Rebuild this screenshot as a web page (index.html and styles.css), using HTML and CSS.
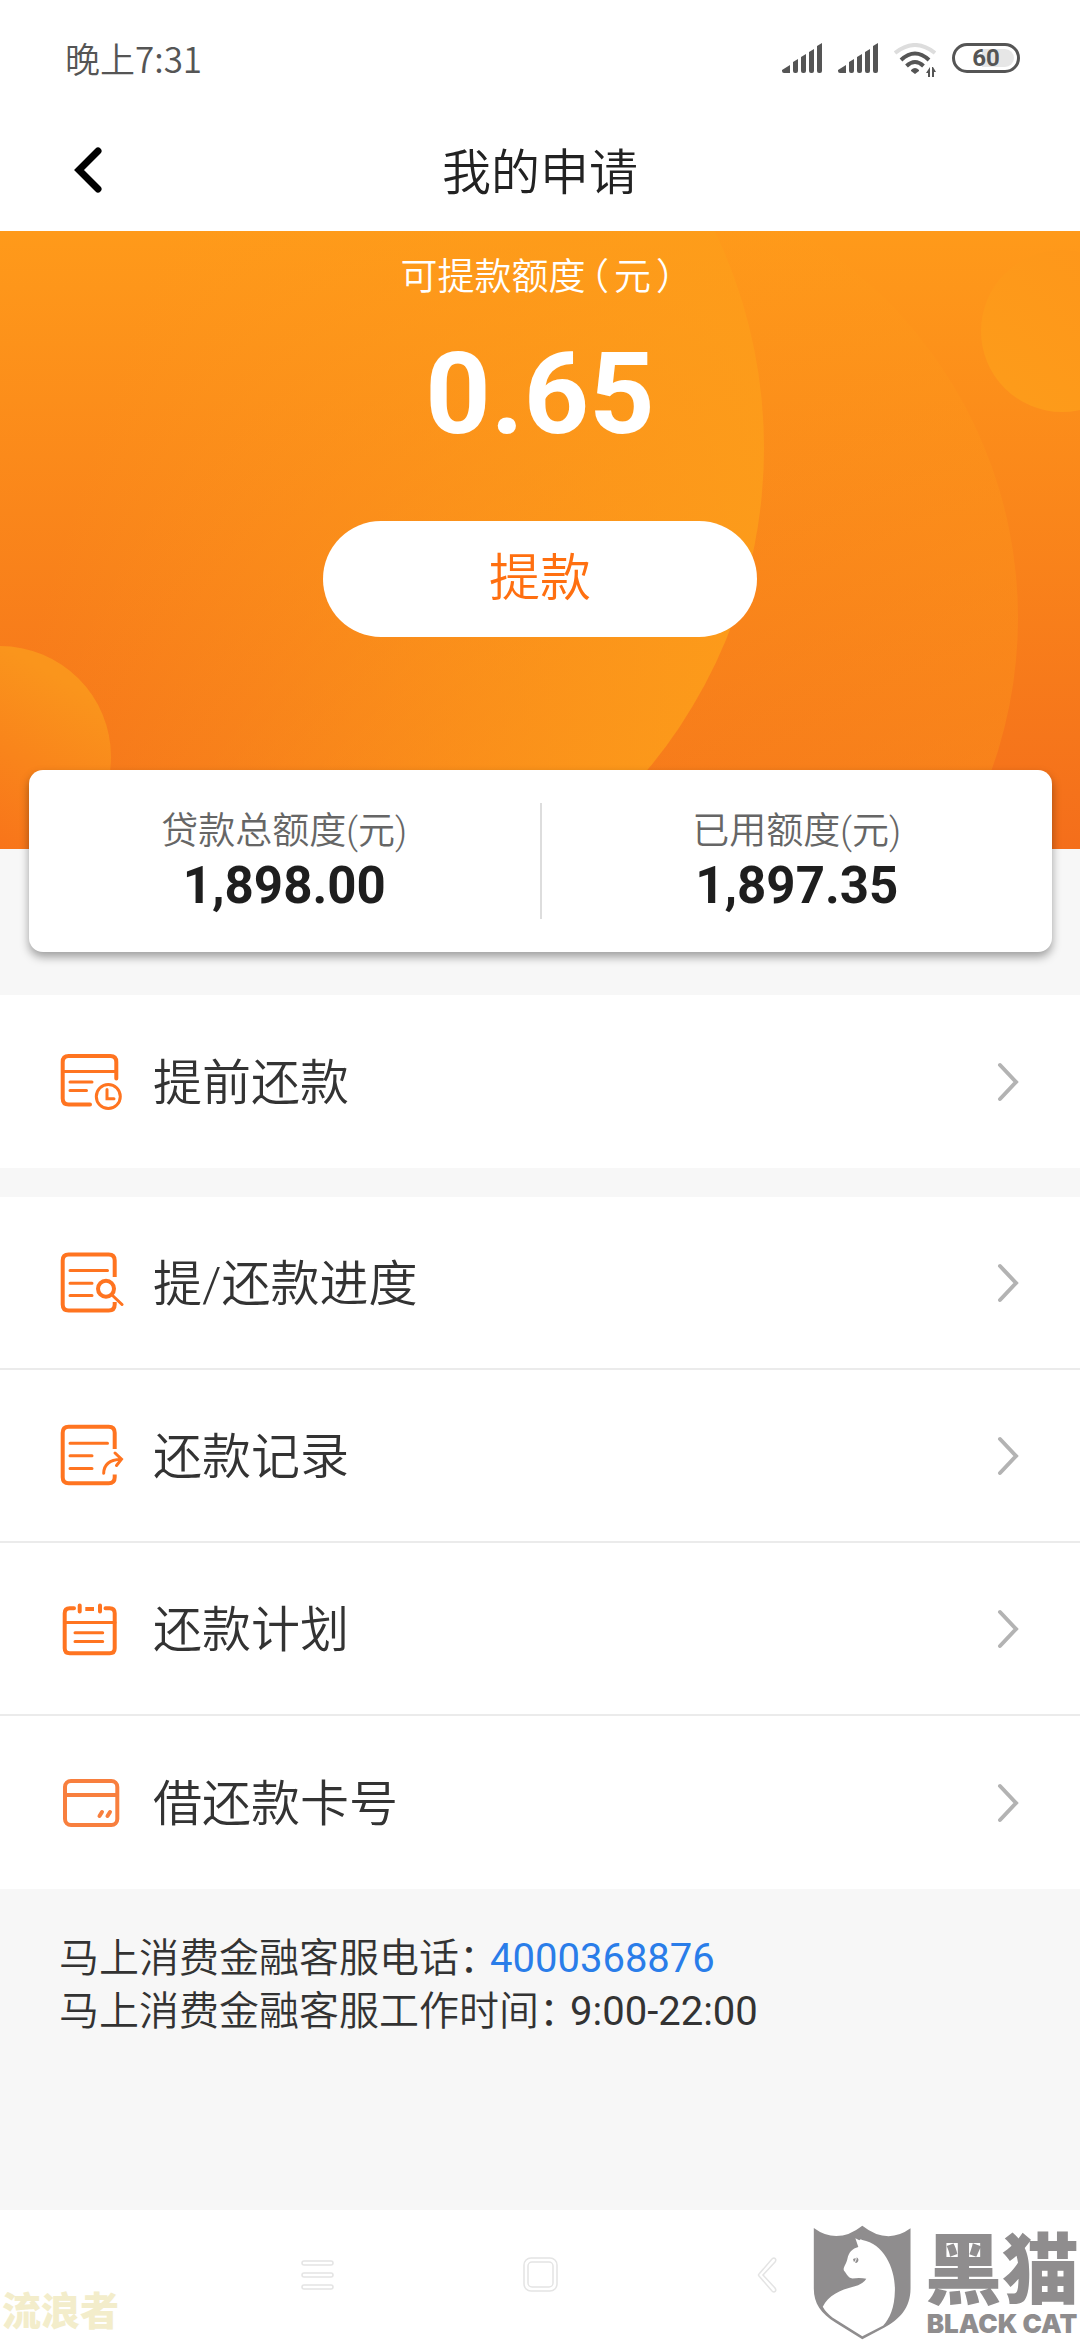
FILE: index.html
```html
<!DOCTYPE html>
<html lang="zh-CN">
<head>
<meta charset="utf-8">
<meta name="viewport" content="width=device-width, initial-scale=1">
<title>我的申请</title>
<link rel="stylesheet" href="styles.css">
</head>
<body>
<div class="page">
  <div class="status">
    <span class="status-time">晚上7:31</span>
    <div class="status-icons">
      <svg class="signal" viewBox="0 0 40 30" aria-hidden="true"><path d="M0 27l8-5v8H2q-2 0-2-2zM11 19l5-3v12q0 2-2 2h-1q-2 0-2-2zM19 14l5-3v17q0 2-2 2h-1q-2 0-2-2zM27 9l5-3v22q0 2-2 2h-1q-2 0-2-2zM35 3l5-3v28q0 2-2 2h-1q-2 0-2-2z"/></svg>
      <svg class="signal" viewBox="0 0 40 30" aria-hidden="true"><path d="M0 27l8-5v8H2q-2 0-2-2zM11 19l5-3v12q0 2-2 2h-1q-2 0-2-2zM19 14l5-3v17q0 2-2 2h-1q-2 0-2-2zM27 9l5-3v22q0 2-2 2h-1q-2 0-2-2zM35 3l5-3v28q0 2-2 2h-1q-2 0-2-2z"/></svg>
      <svg class="wifi" viewBox="0 0 42 34" aria-hidden="true">
        <path class="faint" d="M1 10Q21-6 41 10"/>
        <path class="arc" d="M7 17Q21 4 35 17M12.500 23Q21 15 29.500 23"/>
        <path class="solid" d="M17 27q4-4 8 0v1l-4 3-4-3zM36 24v10h-2v-4h-2zM38 24h1l3 5h-2v5h-2z"/>
      </svg>
      <span class="battery">60</span>
    </div>
  </div>

  <header class="topbar">
    <button class="back" type="button" aria-label="返回"><svg viewBox="0 0 28 46" aria-hidden="true"><path d="M24 4L5 23L24 42"/></svg></button>
    <h1 class="title">我的申请</h1>
  </header>

  <section class="hero">
    <svg class="hero-art" viewBox="0 0 1080 618" preserveAspectRatio="none" aria-hidden="true">
      <defs>
        <linearGradient id="inner" x1="0.38" y1="0.35" x2="1" y2="0.55"><stop offset="0" stop-color="#fd9e1a" stop-opacity="0"/><stop offset="1" stop-color="#fd9e1a" stop-opacity=".85"/></linearGradient>
        <linearGradient id="outer" x1="0.4" y1="0.2" x2="1" y2="0.6"><stop offset="0" stop-color="#fd9c1a" stop-opacity="0"/><stop offset="1" stop-color="#fd9c1a" stop-opacity=".35"/></linearGradient>
        <linearGradient id="sun" x1="1" y1="0" x2="0" y2="1"><stop offset="0" stop-color="#fe961a"/><stop offset="1" stop-color="#fd9c1a"/></linearGradient>
        <linearGradient id="drop" x1="0.7" y1="0.1" x2="0.3" y2="0.8"><stop offset="0" stop-color="#fa951c"/><stop offset="1" stop-color="#f8741a"/></linearGradient>
      </defs>
      <circle cx="568" cy="387" r="450" fill="url(#outer)"/>
      <circle cx="261" cy="217" r="503" fill="url(#inner)"/>
      <circle cx="1062" cy="100" r="81" fill="url(#sun)"/>
      <circle cx="0" cy="526" r="111" fill="url(#drop)"/>
    </svg>
    <p class="hero-label">可提款额度<span class="paren">（</span>元<span class="paren">）</span></p>
    <p class="hero-amount">0.65</p>
    <button class="withdraw" type="button">提款</button>
  </section>

  <section class="quota">
    <div class="quota-item"><span class="quota-label">贷款总额度(元)</span><strong class="quota-value">1,898.00</strong></div>
    <div class="quota-item"><span class="quota-label">已用额度(元)</span><strong class="quota-value">1,897.35</strong></div>
  </section>

  <nav class="menus">
    <div class="group">
      <a class="row" href="#prepay">
        <svg class="row-icon" viewBox="0 0 64 64" aria-hidden="true"><path class="bold" d="M56.300 28.500V12q0-6-6-6H8.700q-6 0-6 6v36.500q0 6 6 6H30"/><path d="M3 21.500h53M10 32h22M10 40.500h16.500M47 39.500v9.300h7"/><circle cx="48.300" cy="46.500" r="12"/></svg>
        <span class="row-text">提前还款</span>
        <svg class="arrow" viewBox="0 0 23 40" aria-hidden="true"><path d="M3 3L19 20L3 37"/></svg>
      </a>
    </div>
    <div class="group">
      <a class="row" href="#progress">
        <svg class="row-icon" viewBox="0 0 64 64" aria-hidden="true"><path class="bold butt" d="M54.700 26V9.500q0-6-6-6h-40q-6 0-6 6v44q0 6 6 6h40q6 0 6-6V51"/><path d="M10 19.500h37.500M10 32.200h22M10 44.500h22M52 44l10 9.500"/><circle class="bold" cx="46" cy="37.800" r="8"/></svg>
        <span class="row-text">提/还款进度</span>
        <svg class="arrow" viewBox="0 0 23 40" aria-hidden="true"><path d="M3 3L19 20L3 37"/></svg>
      </a>
      <a class="row" href="#records">
        <svg class="row-icon" viewBox="0 0 64 64" aria-hidden="true"><path class="bold butt" d="M54.700 25V8.800q0-6-6-6h-40q-6 0-6 6v44.500q0 6 6 6h40q6 0 6-6V50.500"/><path d="M10 19.200h37.500M10 31.800h22M10 44.500h22M43.700 49.200Q44 36 61 35.200M55 29l6.500 6.200L56.500 41.500"/></svg>
        <span class="row-text">还款记录</span>
        <svg class="arrow" viewBox="0 0 23 40" aria-hidden="true"><path d="M3 3L19 20L3 37"/></svg>
      </a>
      <a class="row" href="#plan">
        <svg class="row-icon" viewBox="0 0 64 64" aria-hidden="true"><path class="bold" d="M14 11.200H9.700q-5 0-5 5v35q0 5 5 5h40q5 0 5-5v-35q0-5-5-5H45.500M19.700 8.500v6M40 8.500v6"/><path class="bold butt" d="M25.300 12h8.700"/><path d="M5 25.500h50M15 35.800h27.700M15 44.500h27.700"/></svg>
        <span class="row-text">还款计划</span>
        <svg class="arrow" viewBox="0 0 23 40" aria-hidden="true"><path d="M3 3L19 20L3 37"/></svg>
      </a>
      <a class="row" href="#cards">
        <svg class="row-icon soft" viewBox="0 0 64 64" aria-hidden="true"><rect class="bold" x="5" y="10" width="52.300" height="44" rx="6"/><path class="bold butt" d="M5 24h52"/><path class="bold" d="M42 41l-2.500 4M50 41l-2.500 4"/></svg>
        <span class="row-text">借还款卡号</span>
        <svg class="arrow" viewBox="0 0 23 40" aria-hidden="true"><path d="M3 3L19 20L3 37"/></svg>
      </a>
    </div>
  </nav>

  <footer class="service">
    <p>马上消费金融客服电话<span class="colon">：</span><a class="phone" href="tel:4000368876">4000368876</a></p>
    <p>马上消费金融客服工作时间<span class="colon">：</span><span class="hours">9:00-22:00</span></p>
  </footer>

  <div class="sysnav">
    <button class="sysnav-btn" type="button" aria-label="最近任务"><svg viewBox="0 0 35 36" aria-hidden="true"><rect x="2" y="4" width="31" height="4" rx="2"/><rect x="2" y="16" width="31" height="4" rx="2"/><rect x="2" y="28" width="31" height="4" rx="2"/></svg></button>
    <button class="sysnav-btn" type="button" aria-label="主屏幕"><svg viewBox="0 0 35 36" aria-hidden="true"><rect x="1" y="1" width="33" height="33" rx="7"/><rect x="5" y="5" width="25" height="25" rx="4"/></svg></button>
    <button class="sysnav-btn" type="button" aria-label="后退"><svg viewBox="0 0 35 36" aria-hidden="true"><path d="M28 1q3 1 1 4L17 18l12 13q2 3-1 4-1 0-2-1L13 19q-1-1 0-2L26 2q1-1 2-1z"/></svg></button>
    <span class="user-mark">流浪者</span>
    <div class="brand">
      <svg class="shield" viewBox="92 74 294 346" aria-hidden="true">
        <path fill="#8f8d8e" d="M94 83Q165 135 240 76Q315 135 385 84V265C385 325 350 358 308 382L240 418L160 368C115 340 94 310 94 265Z"/>
        <path fill="#fff" d="M219 114L231 120L235 117L240 119C305 130 339 205 338 270C337 325 322 355 303 376L240 409L150 352Q130 337 121 320C138 285 172 270 215 259Q242 253 252 236Q235 232 210 235C196 233 194 222 185 212C180 203 192 192 195 176C199 155 210 145 228 140Z"/>
        <path fill="#8f8d8e" d="M212 176l8-3-1 7q-2 6-5 4zM223 171q8 5 4 13-4 6-9 3 6-6 5-16z"/>
      </svg>
      <div class="brand-text"><span class="brand-cn">黑猫</span><span class="brand-en">BLACK CAT</span></div>
    </div>
  </div>
</div>
</body>
</html>
```
FILE: styles.css
```css
* { box-sizing: border-box; }
body, h1, p { margin: 0; }
body {
  background: #f7f7f7;
  color: #333;
  font-family: Roboto, "Noto Sans CJK SC", sans-serif;
  font-weight: 350;
}
button { border: 0; padding: 0; background: none; font: inherit; }
a { color: inherit; text-decoration: none; }
svg { display: block; fill: none; }

.page { min-height: 100vh; display: flex; flex-direction: column; }

.status {
  display: flex;
  justify-content: space-between;
  align-items: center;
  height: 116px;
  padding: 0 60px 0 65px;
  background: #fff;
  color: #555;
}
.status-time { font: 350 35px/50px "Noto Sans CJK SC", sans-serif; }
.status-icons { display: flex; gap: 16px; padding-top: 4px; }
.signal { width: 40px; height: 30px; fill: #555; }
.wifi { width: 42px; height: 34px; }
.wifi .faint { stroke: #ddd; stroke-width: 4; }
.wifi .arc { stroke: #555; stroke-width: 4; }
.wifi .solid { fill: #555; }
.battery {
  width: 68px;
  height: 30px;
  border: 3px solid #555;
  border-radius: 15px;
  background: linear-gradient(90deg, transparent 42%, #e6e6e6 42%) content-box;
  padding: 3px;
  overflow: hidden;
  font: 700 24px/18px Roboto, sans-serif;
  text-align: center;
}

.topbar {
  display: grid;
  grid-template-columns: 1fr auto 1fr;
  align-items: center;
  height: 115px;
  padding: 0 74px;
  background: #fff;
}
.back { justify-self: start; padding-bottom: 7px; }
.back svg { width: 28px; height: 46px; }
.back path { stroke: #000; stroke-width: 7; stroke-linecap: round; }
.title { color: #222; font-size: 49px; font-weight: 350; line-height: 58px; }

.hero {
  position: relative;
  display: flex;
  flex-direction: column;
  align-items: center;
  padding: 22px 29px 212px;
  background: linear-gradient(#ff9a1a, #f46e1b);
  color: #fff;
}
.hero-art { position: absolute; inset: 0; width: 100%; height: 100%; }
.hero-label, .hero-amount, .withdraw { position: relative; }
.hero-label { font-size: 37px; line-height: 50px; }
.paren { padding: 0 5px; font-feature-settings: "halt"; }
.hero-amount { margin-top: 21px; font-size: 114px; font-weight: 700; line-height: 140px; }
.withdraw {
  height: 116px;
  margin-top: 57px;
  padding: 0 166px;
  border-radius: 58px;
  background: #fff;
  color: #ff6f10;
  font-size: 51px;
  line-height: 60px;
}

.quota {
  position: relative;
  display: flex;
  align-items: center;
  height: 182px;
  margin: -79px 28px 43px 29px;
  border-radius: 14px;
  background: #fff;
  box-shadow: 0 5px 10px rgba(0, 0, 0, .36);
}
.quota-item {
  flex: 1;
  display: flex;
  flex-direction: column;
  align-items: center;
  height: 116px;
}
.quota-item + .quota-item { border-left: 2px solid #ddd; }
.quota-label { padding-top: 2px; color: #666; font-size: 37px; line-height: 54px; }
.quota-value { color: #1e1e1e; font-size: 51px; font-weight: 700; line-height: 54px; }

.menus { display: flex; flex-direction: column; gap: 29px; }
.group { background: #fff; }
.row { display: flex; align-items: center; gap: 29px; height: 173px; padding: 0 60px; }
.row:not(:last-child) { border-bottom: 2px solid #ebebeb; }
.row-icon { width: 64px; height: 64px; stroke: #ff7420; stroke-width: 3; stroke-linecap: round; }
.row-icon.soft { stroke: #f87f3e; }
.row-icon .bold { stroke-width: 4; }
.row-icon .butt { stroke-linecap: butt; }
.row-text { flex: 1; padding-top: 4px; font-size: 49px; line-height: 58px; }
.arrow { width: 23px; height: 40px; stroke: #b3b3b3; stroke-width: 4; stroke-linecap: round; }

.service { flex: 1; padding: 43px 59px; font-size: 40px; line-height: 53px; }
.colon { padding-right: 11px; font-family: "Noto Sans CJK SC", sans-serif; font-feature-settings: "halt"; line-height: 1; }
.phone { color: #2a7de9; font-weight: 400; }
.hours { font-weight: 400; }

.sysnav {
  position: relative;
  display: flex;
  justify-content: center;
  align-items: center;
  gap: 188px;
  height: 130px;
  background: #fff;
}
.sysnav-btn svg { width: 35px; height: 36px; stroke: #e4e4e4; stroke-width: 1.5; }
.user-mark {
  position: absolute;
  left: 2px;
  bottom: 10px;
  color: #f3edcb;
  font: 900 39px/44px "Noto Sans CJK SC", sans-serif;
}
.brand { position: absolute; right: 1px; bottom: 0; display: flex; gap: 14px; color: #8f8d8e; }
.shield { width: 98px; height: 115px; }
.brand-text { display: flex; flex-direction: column; align-items: center; }
.brand-cn { font: 900 77px/80px "Noto Sans CJK SC", sans-serif; }
.brand-en { padding-top: 5px; font: 900 26px/28px Inter, sans-serif; }
```
